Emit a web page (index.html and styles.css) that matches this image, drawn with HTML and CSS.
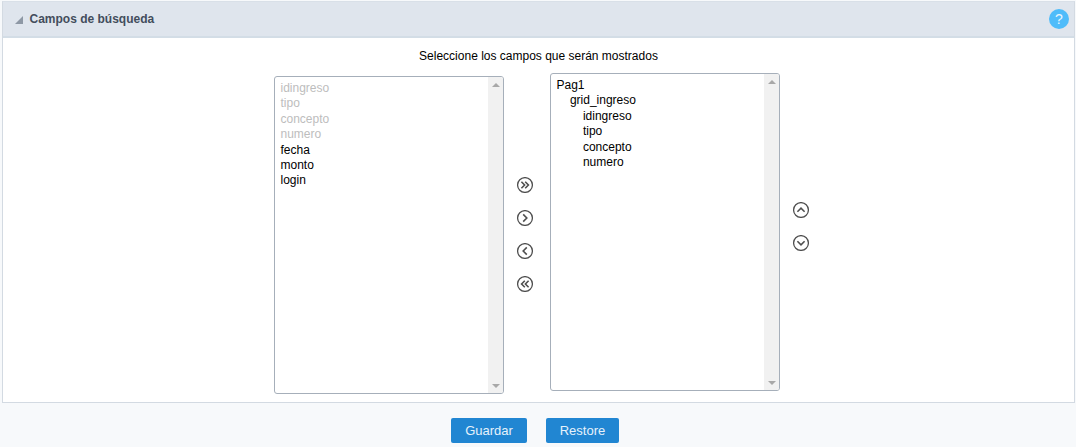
FILE: index.html
```html
<!DOCTYPE html>
<html lang="es">
<head>
<meta charset="utf-8">
<title>Campos de búsqueda</title>
<link rel="stylesheet" href="styles.css">
</head>
<body>
<section class="panel">
  <header class="panel-head">
    <span class="tri"></span>
    <h1 class="panel-title">Campos de búsqueda</h1>
    <span class="help">?</span>
  </header>
  <div class="panel-body">
    <p class="hint">Seleccione los campos que serán mostrados</p>
    <div class="picker">
      <div class="listbox listbox-left">
        <ul class="items">
          <li class="off">idingreso</li>
          <li class="off">tipo</li>
          <li class="off">concepto</li>
          <li class="off">numero</li>
          <li>fecha</li>
          <li>monto</li>
          <li>login</li>
        </ul>
        <div class="scroll"><span class="up"></span><span class="down"></span></div>
      </div>
      <div class="moves">
        <svg class="ico" viewBox="0 0 16 16"><circle cx="8" cy="8" r="7.4"/><path d="M4.4 4.8L7.6 8l-3.2 3.2M8.2 4.8L11.4 8l-3.2 3.2"/></svg>
        <svg class="ico" viewBox="0 0 16 16"><circle cx="8" cy="8" r="7.4"/><path d="M6.2 4.4L9.8 8l-3.6 3.6"/></svg>
        <svg class="ico" viewBox="0 0 16 16"><circle cx="8" cy="8" r="7.4"/><path d="M9.8 4.4L6.2 8l3.6 3.6"/></svg>
        <svg class="ico" viewBox="0 0 16 16"><circle cx="8" cy="8" r="7.4"/><path d="M7.8 4.8L4.6 8l3.2 3.2M11.6 4.8L8.4 8l3.2 3.2"/></svg>
      </div>
      <div class="listbox">
        <ul class="items">
          <li>Pag1</li>
          <li class="lv1">grid_ingreso</li>
          <li class="lv2">idingreso</li>
          <li class="lv2">tipo</li>
          <li class="lv2">concepto</li>
          <li class="lv2">numero</li>
        </ul>
        <div class="scroll"><span class="up"></span><span class="down"></span></div>
      </div>
      <div class="order">
        <svg class="ico" viewBox="0 0 16 16"><circle cx="8" cy="8" r="7.4"/><path d="M4.4 9.8L8 6.2l3.6 3.6"/></svg>
        <svg class="ico" viewBox="0 0 16 16"><circle cx="8" cy="8" r="7.4"/><path d="M4.4 6.2L8 9.8l3.6-3.6"/></svg>
      </div>
    </div>
  </div>
</section>
<footer class="actions">
  <button class="btn btn-save" type="button">Guardar</button>
  <button class="btn btn-restore" type="button">Restore</button>
</footer>
</body>
</html>
```
FILE: styles.css
```css
* { box-sizing: border-box; }
html, body { margin: 0; padding: 0; }
body {
  width: 1076px;
  height: 447px;
  overflow: hidden;
  background: #f7f9fb;
  font-family: "Liberation Sans", Arial, sans-serif;
  font-size: 12px;
  color: #000;
  padding: 1px 1px 0 2px;
}
.panel {
  height: 402px;
  background: #fff;
  border: 1px solid #d3dae2;
  border-top-color: #d9e0e8;
}
.panel-head {
  height: 36px;
  display: flex;
  align-items: center;
  padding: 0 5px 0 12px;
  background: #dfe5ed;
  border-bottom: 2px solid #d3dde6;
}
.tri {
  width: 0;
  height: 0;
  border-left: 8px solid transparent;
  border-bottom: 8px solid #8e98a5;
  margin-top: 2px;
  flex: none;
}
.panel-title {
  margin: 0 0 0 6.5px;
  flex: 1;
  font-size: 12px;
  font-weight: bold;
  color: #434d5c;
}
.help {
  width: 20px;
  height: 20px;
  border-radius: 50%;
  background: #4fbcfa;
  color: #e9f6fe;
  font-size: 14px;
  line-height: 20px;
  text-align: center;
}
.panel-body { padding: 10px 0 0; }
.hint {
  margin: 0;
  height: 16px;
  line-height: 16px;
  text-align: center;
}
.picker {
  display: flex;
  align-items: flex-start;
  margin: 9px 0 0 271px;
}
.listbox {
  width: 230px;
  height: 318px;
  display: flex;
  border: 1px solid #a6afba;
  border-radius: 3px;
  background: #fff;
  overflow: hidden;
}
.listbox-left { margin-top: 3px; }
.items {
  flex: 1;
  list-style: none;
  margin: 0;
  padding: 4px 0 0 5.5px;
  line-height: 15.4px;
}
.items li { height: 15.4px; }
.items li.off { color: #bdbdbd; }
.items li.lv1 { padding-left: 13.4px; }
.items li.lv2 { padding-left: 26.4px; }
.scroll {
  width: 15px;
  display: flex;
  flex-direction: column;
  justify-content: space-between;
  align-items: center;
  padding: 6px 0 5px;
  background: #f1f1f1;
}
.up, .down {
  width: 0;
  height: 0;
  border-left: 4px solid transparent;
  border-right: 4px solid transparent;
}
.up { border-bottom: 4px solid #a8a8a8; }
.down { border-top: 4px solid #a8a8a8; }
.moves, .order {
  display: flex;
  flex-direction: column;
  gap: 17px;
  flex: none;
}
.moves { width: 46px; padding-left: 13px; margin-top: 104px; }
.order { margin: 129px 0 0 13px; }
.ico {
  display: block;
  width: 16px;
  height: 16px;
  fill: none;
  stroke: #4f4f4f;
  stroke-width: 1.25;
}
.ico path { stroke-width: 1.6; }
.actions {
  display: flex;
  gap: 19px;
  margin: 15px 0 0 449px;
}
.btn {
  height: 25px;
  padding: 0;
  border: 0;
  border-radius: 2px;
  background: #2186d2;
  color: #e6f2fb;
  font-family: "Liberation Sans", Arial, sans-serif;
  font-size: 13px;
}
.btn-save { width: 76px; }
.btn-restore { width: 73px; }
```
